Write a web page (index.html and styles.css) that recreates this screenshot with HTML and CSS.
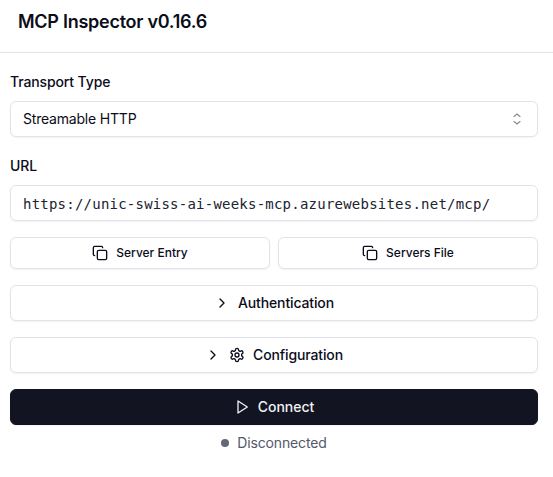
FILE: index.html
```html
<!DOCTYPE html>
<html lang="en">
<head>
<meta charset="utf-8">
<title>MCP Inspector</title>
<link rel="stylesheet" href="styles.css">
</head>
<body>
<header class="header"><h1 class="title">MCP Inspector v0.16.6</h1></header>
<main class="panel">
  <div class="field transport">
    <label class="label">Transport Type</label>
    <div class="control select"><span>Streamable HTTP</span>
      <svg class="sort" viewBox="0 0 16 16"><path d="M5 6V5.6L8 3l3 2.6V6M5 10v.4L8 13l3-2.6V10"/></svg>
    </div>
  </div>
  <div class="field">
    <label class="label">URL</label>
    <div class="control mono">https://unic-swiss-ai-weeks-mcp.azurewebsites.net/mcp/</div>
  </div>
  <div class="pair">
    <button class="button small"><svg class="icon" viewBox="0 0 24 24"><rect x="8" y="8" width="14" height="14" rx="2"/><path d="M4 16c-1.1 0-2-.9-2-2V4c0-1.1.9-2 2-2h10c1.1 0 2 .9 2 2"/></svg><span>Server Entry</span></button>
    <button class="button small"><svg class="icon" viewBox="0 0 24 24"><rect x="8" y="8" width="14" height="14" rx="2"/><path d="M4 16c-1.1 0-2-.9-2-2V4c0-1.1.9-2 2-2h10c1.1 0 2 .9 2 2"/></svg><span>Servers File</span></button>
  </div>
  <button class="button auth"><svg class="icon" viewBox="0 0 24 24"><path d="m9 18 6-6-6-6"/></svg><span>Authentication</span></button>
  <button class="button config"><svg class="icon" viewBox="0 0 24 24"><path d="m9 18 6-6-6-6"/></svg><svg class="icon" viewBox="0 0 24 24"><path d="M12.22 2h-.44a2 2 0 0 0-2 2v.18a2 2 0 0 1-1 1.73l-.43.25a2 2 0 0 1-2 0l-.15-.08a2 2 0 0 0-2.73.73l-.22.38a2 2 0 0 0 .73 2.73l.15.1a2 2 0 0 1 1 1.72v.51a2 2 0 0 1-1 1.74l-.15.09a2 2 0 0 0-.73 2.73l.22.38a2 2 0 0 0 2.73.73l.15-.08a2 2 0 0 1 2 0l.43.25a2 2 0 0 1 1 1.73V20a2 2 0 0 0 2 2h.44a2 2 0 0 0 2-2v-.18a2 2 0 0 1 1-1.73l.43-.25a2 2 0 0 1 2 0l.15.08a2 2 0 0 0 2.73-.73l.22-.39a2 2 0 0 0-.73-2.73l-.15-.08a2 2 0 0 1-1-1.74v-.5a2 2 0 0 1 1-1.74l.15-.09a2 2 0 0 0 .73-2.73l-.22-.38a2 2 0 0 0-2.73-.73l-.15.08a2 2 0 0 1-2 0l-.43-.25a2 2 0 0 1-1-1.73V4a2 2 0 0 0-2-2z"/><circle cx="12" cy="12" r="3"/></svg><span>Configuration</span></button>
  <div class="connection">
    <button class="button primary"><svg class="icon" viewBox="0 0 24 24"><path d="m6 3 14 9-14 9z"/></svg><span>Connect</span></button>
    <div class="status"><span class="dot"></span><span>Disconnected</span></div>
  </div>
</main>
</body>
</html>
```
FILE: styles.css
```css
* { box-sizing: border-box; }
body { margin: 0; background: #fff; color: #0b0d1a; font: 14px/20px Inter, sans-serif; overflow: hidden; }
.header { height: 53px; padding: 8px 18px; border-bottom: 1px solid #e1e1ea; }
.title { margin: 0; font-size: 18px; line-height: 28px; font-weight: 600; letter-spacing: -0.26px; }
.panel { display: flex; flex-direction: column; gap: 16px; padding: 19px 15px 0 10px; }
.field { display: flex; flex-direction: column; gap: 9px; }
.transport { margin-bottom: 3px; }
.label { font-weight: 500; letter-spacing: -0.13px; }
.control { display: flex; align-items: center; height: 36px; padding: 0 12px; border: 1px solid #e1e2ec; border-radius: 6px; box-shadow: 0 1px 2px #0000000d; letter-spacing: -0.2px; }
.select { justify-content: space-between; }
.mono { padding-top: 2px; font-family: "DejaVu Sans Mono", monospace; letter-spacing: 0.225px; color: #202330; }
.pair { display: grid; grid-template-columns: 1fr 1fr; gap: 8px; }
.button { display: flex; align-items: center; justify-content: center; gap: 8px; width: 100%; height: 36px; padding: 0 16px; border: 1px solid #e1e2ec; border-radius: 6px; background: #fff; color: inherit; font: 500 14px/20px Inter, sans-serif; letter-spacing: -0.13px; box-shadow: 0 1px 2px #0000000d; }
.small { height: 32px; font-size: 12px; letter-spacing: 0; }
.icon { width: 16px; height: 16px; fill: none; stroke: currentColor; stroke-width: 2; stroke-linecap: round; stroke-linejoin: round; flex: none; }
.sort { width: 16px; height: 16px; fill: none; stroke: #858585; stroke-width: 1.1; }
.connection { display: flex; flex-direction: column; gap: 8px; }
.primary { background: #121422; border-color: #121422; color: #f0f2f5; letter-spacing: 0; }
.status { display: flex; align-items: center; justify-content: center; gap: 8px; color: #55576a; letter-spacing: -0.14px; }
.dot { width: 8px; height: 8px; border-radius: 50%; background: #656879; }
```
